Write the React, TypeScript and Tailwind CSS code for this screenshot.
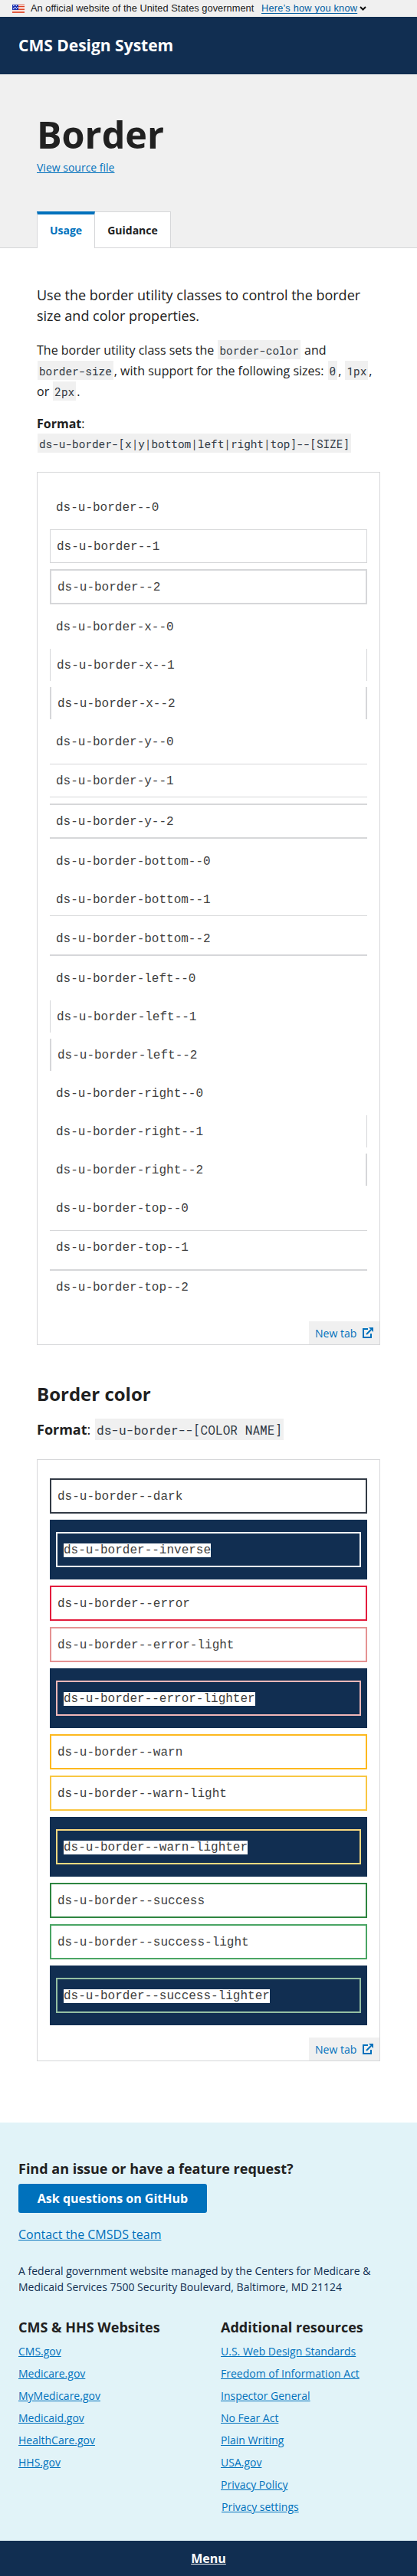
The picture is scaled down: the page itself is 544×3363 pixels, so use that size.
import React from 'react';

const sizeRows: [string, string][] = [
  ['--0', ''],
  ['--1', 'border'],
  ['--2', 'border-2'],
  ['-x--0', ''],
  ['-x--1', 'border-x'],
  ['-x--2', 'border-x-2'],
  ['-y--0', ''],
  ['-y--1', 'border-y'],
  ['-y--2', 'border-y-2'],
  ['-bottom--0', ''],
  ['-bottom--1', 'border-b'],
  ['-bottom--2', 'border-b-2'],
  ['-left--0', ''],
  ['-left--1', 'border-l'],
  ['-left--2', 'border-l-2'],
  ['-right--0', ''],
  ['-right--1', 'border-r'],
  ['-right--2', 'border-r-2'],
  ['-top--0', ''],
  ['-top--1', 'border-t'],
  ['-top--2', 'border-t-2'],
];

const colorRows: [string, string, boolean][] = [
  ['dark', 'border-[#323a45]', false],
  ['inverse', 'border-white', true],
  ['error', 'border-[#e31c3d]', false],
  ['error-light', 'border-[#e59393]', false],
  ['error-lighter', 'border-[#f2b8b8]', true],
  ['warn', 'border-[#fdb81e]', false],
  ['warn-light', 'border-[#f9c642]', false],
  ['warn-lighter', 'border-[#fad980]', true],
  ['success', 'border-[#2e8540]', false],
  ['success-light', 'border-[#4aa564]', false],
  ['success-lighter', 'border-[#94bfa2]', true],
];

const footerColumns = [
  {
    title: 'CMS & HHS Websites',
    links: ['CMS.gov', 'Medicare.gov', 'MyMedicare.gov', 'Medicaid.gov', 'HealthCare.gov', 'HHS.gov'],
  },
  {
    title: 'Additional resources',
    links: [
      'U.S. Web Design Standards',
      'Freedom of Information Act',
      'Inspector General',
      'No Fear Act',
      'Plain Writing',
      'USA.gov',
      'Privacy Policy',
      'Privacy settings',
    ],
  },
];

function Code({ children }: { children: React.ReactNode }) {
  return (
    <code className="-my-1 mx-px inline-block bg-[#f0f0f0] px-0.5 pt-1 pb-0.5 font-['Roboto_Mono','DejaVu_Sans_Mono',monospace] text-[14.36px] leading-[19px] text-[#323a45]">
      {children}
    </code>
  );
}

function Sample({ suffix, className, highlight }: { suffix: string; className: string; highlight?: boolean }) {
  return (
    <div className={`p-2 ${className}`}>
      <div className="h-[26px] text-[16px] leading-6">
        <span className={`font-['Liberation_Mono',monospace] text-[#404040] ${highlight ? 'bg-white' : ''}`}>ds-u-border{suffix}</span>
      </div>
    </div>
  );
}

function Flag() {
  return (
    <svg className="shrink-0" width="16" height="11" viewBox="0 0 16 11" shapeRendering="crispEdges">
      <rect width="16" height="11" fill="#fff" />
      {[0, 2, 4, 6, 8, 10].map((y) => (
        <rect key={y} y={y} width="16" height="1" fill="#db3e1f" />
      ))}
      <rect width="8" height="7" fill="#1e33b1" />
      {[1, 3, 5].map((y) =>
        [1, 3, 5].map((x) => <rect key={`${x}-${y}`} x={x + (y === 3 ? 1 : 0)} y={y} width="1" height="1" fill="#fff" />),
      )}
    </svg>
  );
}

function NewTab() {
  return (
    <div className="flex justify-end">
      <a className="flex h-[30px] w-[92px] items-center gap-2 bg-[#f0f0f0] pl-2 text-[14px] text-[#0071bc]">
        <span className="w-[54px] whitespace-nowrap">New tab</span>
        <svg className="shrink-0" width="14" height="14" viewBox="0 0 14 14" fill="none" stroke="#0071bc">
          <path d="M7 2H1v11h10V8" strokeWidth="2" />
          <path d="M5 9l6-6" strokeWidth="2" />
          <path d="M8 0h6v6z" fill="#0071bc" stroke="none" />
        </svg>
      </a>
    </div>
  );
}

export default function App() {
  return (
    <div className="bg-white font-['Open_Sans',sans-serif] text-[#212121]">
      <div className="flex h-[22px] items-center bg-[#f0f0f0] pl-4 font-['Liberation_Sans',sans-serif] text-[12.8px]">
        <Flag />
        <span className="ml-2 w-[293px] shrink-0 whitespace-nowrap tracking-[0.04px]">An official website of the United States government</span>
        <a className="ml-2 w-[126px] shrink-0 whitespace-nowrap tracking-[0.2px] text-[#005ea2] underline underline-offset-2">Here’s how you know</a>
        <svg className="ml-0.5 shrink-0" width="9" height="6" viewBox="0 0 9 6" fill="none" stroke="#111" strokeWidth="2">
          <path d="M1 1l3.5 3.5L8 1" />
        </svg>
      </div>
      <header className="flex h-[75px] items-center bg-[#112e51] pl-6 text-[21px] font-bold text-white">CMS Design System</header>
      <div className="flex h-[227px] flex-col border-b border-[#d6d7d9] bg-[#f0f0f0] pl-12">
        <h1 className="mt-[47px] text-[48.5px] leading-[62px] font-bold">Border</h1>
        <a className="mt-0.5 text-[14px] leading-[21px] text-[#0071bc] underline">View source file</a>
        <div className="mt-auto -mb-px flex h-[48px] text-[14px] font-bold">
          <div className="flex w-[76px] items-center justify-center border-x border-t-4 border-x-[#d6d7d9] border-t-[#0071bc] bg-white pb-1 text-[#0071bc]">Usage</div>
          <div className="flex w-[99px] items-center justify-center border-y border-r border-[#d6d7d9] bg-white">Guidance</div>
        </div>
      </div>
      <main className="px-12">
        <p className="pt-[48px] text-[18px] leading-[27px]">Use the border utility classes to control the border size and color properties.</p>
        <p className="mt-[18px] text-[16px] leading-[27px]">
          The border utility class sets the <Code>border-color</Code> and <Code>border-size</Code>, with support for the following sizes: <Code>0</Code>, <Code>1px</Code>, or <Code>2px</Code>.
        </p>
        <p className="mt-[15px] text-[16px] leading-[26px]">
          <b>Format</b>:<br />
          <Code>ds-u-border-[x|y|bottom|left|right|top]--[SIZE]</Code>
        </p>
        <div className="mt-6 h-[1140px] border border-[#d6d7d9]">
          <div className="flex h-[1108px] flex-col gap-2 px-4 pt-6">
            {sizeRows.map(([suffix, cls]) => (
              <Sample key={suffix} suffix={suffix} className={`border-[#d6d7d9] ${cls}`} />
            ))}
          </div>
          <NewTab />
        </div>
        <h2 className="mt-[46px] text-[24px] leading-[36px] font-bold">Border color</h2>
        <p className="mt-[14px] h-7 text-[18px] leading-[28px]">
          <b>Format</b>:{' '}
          <code className="-my-1 mx-px inline-block bg-[#f0f0f0] px-0.5 pt-1 pb-0.5 font-['Roboto_Mono','DejaVu_Sans_Mono',monospace] text-[16.15px] leading-[22px] text-[#323a45]">
            ds-u-border--[COLOR NAME]
          </code>
        </p>
        <div className="mt-[25px] h-[786px] border border-[#d6d7d9]">
          <div className="flex h-[754px] flex-col gap-2 px-4 pt-6">
            {colorRows.map(([name, cls, dark]) =>
              dark ? (
                <div key={name} className="bg-[#112e51] px-2 py-4">
                  <Sample suffix={`--${name}`} className={`border-2 ${cls}`} highlight />
                </div>
              ) : (
                <Sample key={name} suffix={`--${name}`} className={`border-2 ${cls}`} />
              ),
            )}
          </div>
          <NewTab />
        </div>
      </main>
      <footer className="mt-20 h-[546px] bg-[#e1f3f8] px-6 pt-[47px]">
        <h3 className="text-[18px] leading-[27px] font-bold">Find an issue or have a feature request?</h3>
        <a className="mt-1.5 flex h-[38px] w-[246px] items-center justify-center rounded-[3px] bg-[#0071bc] text-[16px] font-bold text-white">Ask questions on GitHub</a>
        <a className="mt-4 block text-[16px] leading-6 text-[#0071bc] underline">Contact the CMSDS team</a>
        <p className="mt-[25px] text-[14px] leading-[21px] whitespace-nowrap text-[#112e51]">
          A federal government website managed by the Centers for Medicare &amp;
          <br />
          Medicaid Services 7500 Security Boulevard, Baltimore, MD 21124
        </p>
        <div className="mt-[29px] flex">
          {footerColumns.map((c) => (
            <div key={c.title} className="w-[264px] shrink-0 last:w-[232px]">
              <h3 className="text-[18px] leading-[27px] font-bold">{c.title}</h3>
              <ul className="mt-[7px] flex flex-col gap-2 text-[14px] leading-[21px] text-[#0071bc]">
                {c.links.map((l) => (
                  <li key={l} className={l === 'Privacy settings' ? 'pl-px underline' : 'underline'}>{l}</li>
                ))}
              </ul>
            </div>
          ))}
        </div>
      </footer>
      <div className="flex h-[46px] items-center justify-center bg-[#112e51] text-[16px] font-bold text-white underline">Menu</div>
    </div>
  );
}
